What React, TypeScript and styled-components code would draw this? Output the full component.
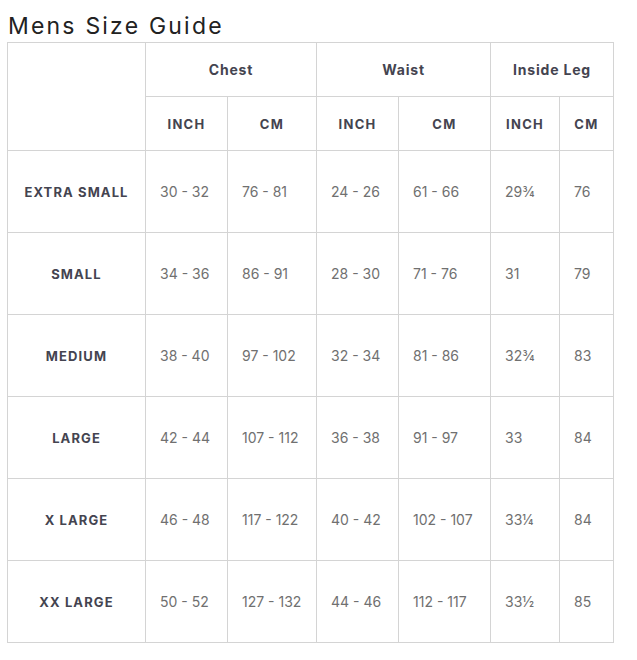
import React from "react";
import styled, { createGlobalStyle } from "styled-components";

const GlobalStyle = createGlobalStyle`
  html, body {
    margin: 0;
    padding: 0;
    background: #ffffff;
  }
  body {
    font-family: Inter, "Open Sans", "DejaVu Sans", sans-serif;
  }
`;

const Page = styled.div`
  padding: 12px 0 0 7px;
  width: 620px;
`;

const Title = styled.h1`
  margin: 0 0 2px 1px;
  font-family: Inter, "DejaVu Sans", sans-serif;
  font-weight: 400;
  font-size: 23px;
  line-height: 28px;
  color: #222222;
  letter-spacing: 2.2px;
`;

const Table = styled.table`
  border-collapse: collapse;
  table-layout: fixed;
  width: 606px;
  border: 1px solid #d4d4d4;
`;

const HeadCell = styled.th<{ $small?: boolean }>`
  border: 1px solid #d4d4d4;
  height: 53px;
  padding: 0;
  text-align: center;
  vertical-align: middle;
  font-weight: 700;
  font-size: ${(p) => (p.$small ? "13px" : "14px")};
  color: #444450;
  letter-spacing: ${(p) => (p.$small ? "1.3px" : "0.8px")};
`;

const SizeCell = styled.th`
  border: 1px solid #d4d4d4;
  height: 81px;
  padding: 0;
  text-align: center;
  vertical-align: middle;
  font-weight: 700;
  font-size: 13px;
  color: #444450;
  letter-spacing: 1.1px;
`;

const ValueCell = styled.td`
  border: 1px solid #d4d4d4;
  padding: 0 0 0 14px;
  text-align: left;
  vertical-align: middle;
  font-weight: 400;
  font-size: 14px;
  color: #707070;
  white-space: nowrap;
`;

const widths = [138, 82, 89, 82, 92, 69, 54];

const rows: { size: string; values: string[] }[] = [
  { size: "EXTRA SMALL", values: ["30 - 32", "76 - 81", "24 - 26", "61 - 66", "29¾", "76"] },
  { size: "SMALL", values: ["34 - 36", "86 - 91", "28 - 30", "71 - 76", "31", "79"] },
  { size: "MEDIUM", values: ["38 - 40", "97 - 102", "32 - 34", "81 - 86", "32¾", "83"] },
  { size: "LARGE", values: ["42 - 44", "107 - 112", "36 - 38", "91 - 97", "33", "84"] },
  { size: "X LARGE", values: ["46 - 48", "117 - 122", "40 - 42", "102 - 107", "33¼", "84"] },
  { size: "XX LARGE", values: ["50 - 52", "127 - 132", "44 - 46", "112 - 117", "33½", "85"] },
];

export default function App() {
  return (
    <>
      <GlobalStyle />
      <Page>
        <Title>Mens Size Guide</Title>
        <Table>
          <colgroup>
            {widths.map((w, i) => (
              <col key={i} style={{ width: w }} />
            ))}
          </colgroup>
          <thead>
            <tr>
              <HeadCell rowSpan={2} />
              <HeadCell colSpan={2}>Chest</HeadCell>
              <HeadCell colSpan={2}>Waist</HeadCell>
              <HeadCell colSpan={2}>Inside Leg</HeadCell>
            </tr>
            <tr>
              <HeadCell $small>INCH</HeadCell>
              <HeadCell $small>CM</HeadCell>
              <HeadCell $small>INCH</HeadCell>
              <HeadCell $small>CM</HeadCell>
              <HeadCell $small>INCH</HeadCell>
              <HeadCell $small>CM</HeadCell>
            </tr>
          </thead>
          <tbody>
            {rows.map((r) => (
              <tr key={r.size}>
                <SizeCell scope="row">{r.size}</SizeCell>
                {r.values.map((v, i) => (
                  <ValueCell key={i}>{v}</ValueCell>
                ))}
              </tr>
            ))}
          </tbody>
        </Table>
      </Page>
    </>
  );
}
